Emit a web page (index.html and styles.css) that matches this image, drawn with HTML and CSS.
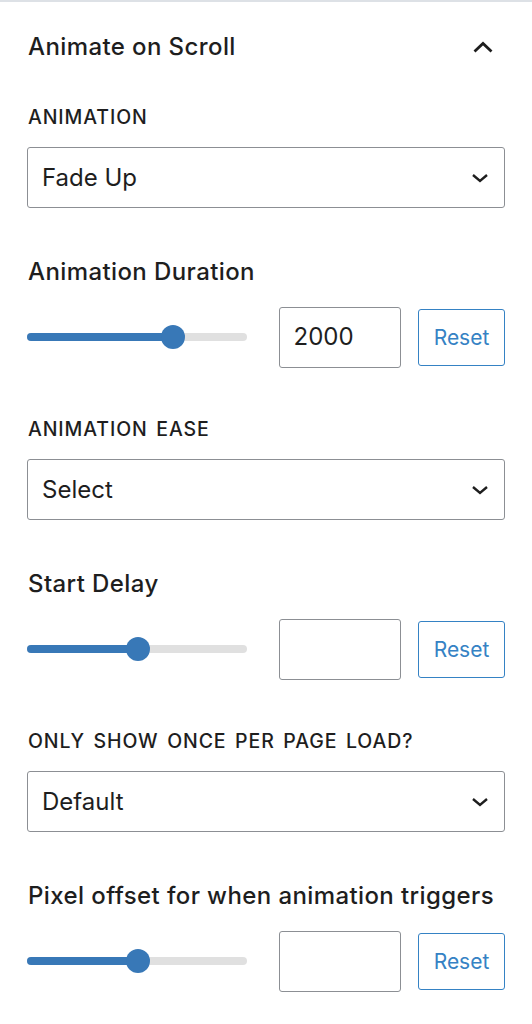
FILE: index.html
```html
<!DOCTYPE html>
<html lang="en">
<head>
<meta charset="utf-8">
<title>Animate on Scroll</title>
<link rel="stylesheet" href="styles.css">
</head>
<body>
<div class="panel">
  <div class="header">
    <h2 class="title">Animate on Scroll</h2>
    <svg class="chev-up" width="20" height="12" viewBox="0 0 20 12"><path d="M1.5 10.5 L10 2.5 L18.5 10.5" fill="none" stroke="#1e1e1e" stroke-width="2.8"/></svg>
  </div>

  <div class="field first">
    <div class="caps">ANIMATION</div>
    <div class="select"><span>Fade Up</span><svg class="chev" width="18" height="10" viewBox="0 0 18 10"><path d="M2 2 L9 8 L16 2" fill="none" stroke="#1e1e1e" stroke-width="2.4"/></svg></div>
  </div>

  <div class="field">
    <div class="label">Animation Duration</div>
    <div class="range-row">
      <div class="slider"><div class="fill" style="width:146px"></div><div class="thumb" style="left:134px"></div></div>
      <div class="num">2000</div>
      <button class="reset">Reset</button>
    </div>
  </div>

  <div class="field">
    <div class="caps">ANIMATION EASE</div>
    <div class="select"><span>Select</span><svg class="chev" width="18" height="10" viewBox="0 0 18 10"><path d="M2 2 L9 8 L16 2" fill="none" stroke="#1e1e1e" stroke-width="2.4"/></svg></div>
  </div>

  <div class="field">
    <div class="label">Start Delay</div>
    <div class="range-row">
      <div class="slider"><div class="fill" style="width:111px"></div><div class="thumb" style="left:99px"></div></div>
      <div class="num"></div>
      <button class="reset">Reset</button>
    </div>
  </div>

  <div class="field">
    <div class="caps">ONLY SHOW ONCE PER PAGE LOAD?</div>
    <div class="select"><span>Default</span><svg class="chev" width="18" height="10" viewBox="0 0 18 10"><path d="M2 2 L9 8 L16 2" fill="none" stroke="#1e1e1e" stroke-width="2.4"/></svg></div>
  </div>

  <div class="field">
    <div class="label">Pixel offset for when animation triggers</div>
    <div class="range-row">
      <div class="slider"><div class="fill" style="width:111px"></div><div class="thumb" style="left:99px"></div></div>
      <div class="num"></div>
      <button class="reset">Reset</button>
    </div>
  </div>
</div>
</body>
</html>
```

FILE: styles.css
```css
* { box-sizing: border-box; }
html, body { margin: 0; padding: 0; background: #fff; }
body {
  font-family: Inter, "Liberation Sans", Arial, sans-serif;
  color: #1e1e1e;
  width: 532px;
  height: 1024px;
  overflow: hidden;
}
.panel {
  border-top: 2px solid #dde1e6;
  padding: 0 27px 0 28px;
}
.header {
  height: 90px;
  display: flex;
  align-items: center;
  justify-content: space-between;
}
.title {
  margin: 0;
  font-size: 24px;
  font-weight: 500;
  line-height: 28px;
  letter-spacing: 0.4px;
}
.chev-up { margin-right: 12px; margin-top: -1px; }
.field { margin-top: 49.5px; }
.field.first { margin-top: 13px; }
.caps {
  font-size: 19.5px;
  font-weight: 500;
  line-height: 24px;
  letter-spacing: 0.9px;
  word-spacing: 2.5px;
  margin-bottom: 18px;
}
.label {
  font-size: 24px;
  font-weight: 500;
  line-height: 28px;
  letter-spacing: 0.4px;
  margin-bottom: 21px;
}
.select {
  height: 61px;
  margin-left: -1px;
  border: 1.5px solid #8c8f94;
  border-radius: 3px;
  display: flex;
  align-items: center;
  justify-content: space-between;
  padding: 0 15px 0 14px;
  font-size: 24px;
}
.chev { margin-top: 1px; }
.range-row {
  display: flex;
  align-items: center;
  height: 61px;
}
.slider {
  position: relative;
  width: 220px;
  height: 8px;
  margin-left: -1px;
  border-radius: 4px;
  background: #e0e0e0;
}
.fill {
  height: 8px;
  border-radius: 4px;
  background: #3878b7;
}
.thumb {
  position: absolute;
  top: -8px;
  width: 24px;
  height: 24px;
  border-radius: 50%;
  background: #3878b7;
}
.num {
  margin-left: 32px;
  width: 122px;
  height: 61px;
  border: 1.5px solid #8c8f94;
  border-radius: 3px;
  font-size: 24px;
  line-height: 58px;
  padding-left: 13.5px;
}
.reset {
  margin-left: 17px;
  width: 87px;
  height: 57px;
  border: 1.5px solid #3582c4;
  border-radius: 3px;
  background: #fff;
  color: #3582c4;
  font-family: inherit;
  font-size: 21px;
  font-weight: 400;
  padding: 0;
}
```
